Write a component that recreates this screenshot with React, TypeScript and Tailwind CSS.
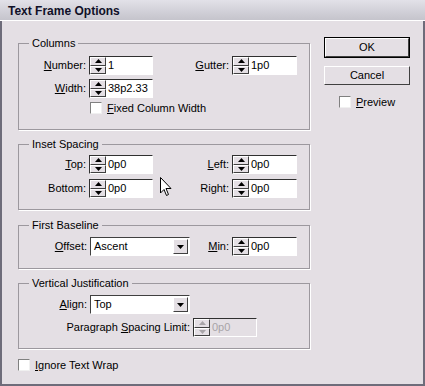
import React from 'react';

const BG = 'bg-[#e4dfe4]';

function Arrow({ dir, disabled }: { dir: 'up' | 'down'; disabled?: boolean }) {
  return (
    <svg width="7" height="4" viewBox="0 0 7 4">
      {dir === 'up' ? (
        <path d="M3.5 0 L7 4 L0 4 Z" fill={disabled ? '#a8a4a8' : '#000'} />
      ) : (
        <path d="M0 0 L7 0 L3.5 4 Z" fill={disabled ? '#a8a4a8' : '#000'} />
      )}
    </svg>
  );
}

function Spinner({ disabled }: { disabled?: boolean }) {
  return (
    <div className="flex w-[16px] shrink-0 flex-col">
      <div className={`flex flex-1 items-center justify-center border-t border-l border-t-white border-l-white border-b border-r border-b-[#404040] border-r-[#404040] ${BG}`}>
        <Arrow dir="up" disabled={disabled} />
      </div>
      <div className={`flex flex-1 items-center justify-center border-t border-l border-t-white border-l-white border-b border-r border-b-[#404040] border-r-[#404040] ${BG}`}>
        <Arrow dir="down" disabled={disabled} />
      </div>
    </div>
  );
}

function Field({ value, width, disabled }: { value: string; width: string; disabled?: boolean }) {
  return (
    <div className={`flex h-[19px] border-t border-l border-t-[#303030] border-l-[#303030] border-b border-r border-b-white border-r-white ${width}`}>
      <Spinner disabled={disabled} />
      <div className={`flex flex-1 items-center pl-[2px] ${disabled ? `${BG} text-[#a8a4a8]` : 'bg-white'}`}>{value}</div>
    </div>
  );
}

function Dropdown({ value }: { value: string }) {
  return (
    <div className="flex h-[19px] w-[100px] border-t border-l border-t-[#404040] border-l-[#404040] border-b border-r border-b-white border-r-white bg-white">
      <div className="flex flex-1 items-center pl-[3px]">{value}</div>
      <div className={`m-[1px] flex w-[15px] items-center justify-center border-t border-l border-t-white border-l-white border-b border-r border-b-[#404040] border-r-[#404040] ${BG}`}>
        <Arrow dir="down" />
      </div>
    </div>
  );
}

function Check({ label }: { label: React.ReactNode }) {
  return (
    <div className="flex items-center gap-[5px]">
      <div className="h-[12px] w-[12px] border-t border-l border-t-[#808080] border-l-[#808080] border-b border-r border-b-[#f0f0f0] border-r-[#f0f0f0] bg-white" />
      <span>{label}</span>
    </div>
  );
}

function Group({ title, className, children }: { title: string; className: string; children: React.ReactNode }) {
  return (
    <div className={`relative border border-[#9c989e] shadow-[1px_1px_0_#fff] ${className}`}>
      <span className={`absolute -top-[7px] left-[10px] px-[3px] leading-[13px] ${BG}`}>{title}</span>
      {children}
    </div>
  );
}

function Label({ w, children }: { w: string; children: React.ReactNode }) {
  return <div className={`${w} shrink-0 pr-[3px] text-right`}>{children}</div>;
}

function Cursor() {
  return (
    <svg className="absolute left-[141px] top-[22px]" width="12" height="20" viewBox="0 0 12 20">
      <path d="M0.5 0.5 L0.5 16 L4 12.5 L6.5 18.5 L8.5 17.5 L6 11.5 L11 11.5 Z" fill="#fff" stroke="#000" strokeWidth="1" />
    </svg>
  );
}

export default function App() {
  return (
    <div className={`flex h-[386px] w-[425px] flex-col overflow-hidden text-[11px] text-black ${BG}`} style={{ fontFamily: '"Liberation Sans", Arial, sans-serif' }}>
      <div className="h-[20px] shrink-0 bg-gradient-to-b from-[#e2e1e8] to-[#c5c4cc] pl-[8px] pt-[3px] text-[12px] font-bold leading-[16px] text-[#101028]">
        Text Frame Options
      </div>
      <div className="h-[1px] shrink-0 bg-white" />
      <div className="flex flex-1 border-x-2 border-b-2 border-[#6e6c7a]">
        <div className="ml-[16px] mt-[22px] flex w-[292px] flex-col">
          <Group title="Columns" className="h-[87px] pt-[12px]">
            <div className="flex h-[19px] items-center">
              <Label w="w-[70px]"><u>N</u>umber:</Label>
              <Field value="1" width="w-[64px]" />
              <Label w="w-[79px]"><u>G</u>utter:</Label>
              <Field value="1p0" width="w-[65px]" />
            </div>
            <div className="mt-[4px] flex h-[19px] items-center">
              <Label w="w-[70px]"><u>W</u>idth:</Label>
              <Field value="38p2.33" width="w-[64px]" />
            </div>
            <div className="ml-[71px] mt-[2px]">
              <Check label={<><u>F</u>ixed Column Width</>} />
            </div>
          </Group>

          <Group title="Inset Spacing" className="mt-[14px] h-[66px] pt-[10px]">
            <div className="relative flex h-[19px] items-center">
              <Label w="w-[70px]"><u>T</u>op:</Label>
              <Field value="0p0" width="w-[64px]" />
              <Label w="w-[79px]"><u>L</u>eft:</Label>
              <Field value="0p0" width="w-[65px]" />
              <Cursor />
            </div>
            <div className="mt-[5px] flex h-[19px] items-center">
              <Label w="w-[70px]">Bottom:</Label>
              <Field value="0p0" width="w-[64px]" />
              <Label w="w-[79px]">Right:</Label>
              <Field value="0p0" width="w-[65px]" />
            </div>
          </Group>

          <Group title="First Baseline" className="mt-[15px] h-[44px] pt-[11px]">
            <div className="flex h-[19px] items-center">
              <Label w="w-[71px]"><u>O</u>ffset:</Label>
              <Dropdown value="Ascent" />
              <Label w="w-[42px]"><u>M</u>in:</Label>
              <Field value="0p0" width="w-[65px]" />
            </div>
          </Group>

          <Group title="Vertical Justification" className="mt-[14px] h-[66px] pt-[11px]">
            <div className="flex h-[19px] items-center">
              <Label w="w-[71px]"><u>A</u>lign:</Label>
              <Dropdown value="Top" />
            </div>
            <div className="mt-[4px] flex h-[19px] items-center">
              <Label w="w-[174px]">Paragraph <u>S</u>pacing Limit:</Label>
              <Field value="0p0" width="w-[64px]" disabled />
            </div>
          </Group>

          <div className="mt-[8px]">
            <Check label={<><u>I</u>gnore Text Wrap</>} />
          </div>
        </div>

        <div className="ml-[14px] mt-[16px] flex w-[86px] flex-col">
          <div className="h-[21px] border border-black">
            <div className="flex h-full items-center justify-center border-t border-l border-t-white border-l-white border-b border-r border-b-[#404040] border-r-[#404040]">OK</div>
          </div>
          <div className="mt-[8px] flex h-[19px] items-center justify-center border-t border-l border-t-white border-l-white border-b border-r border-b-[#404040] border-r-[#404040]">
            Cancel
          </div>
          <div className="ml-[15px] mt-[9px]">
            <Check label={<><u>P</u>review</>} />
          </div>
        </div>
      </div>
    </div>
  );
}
